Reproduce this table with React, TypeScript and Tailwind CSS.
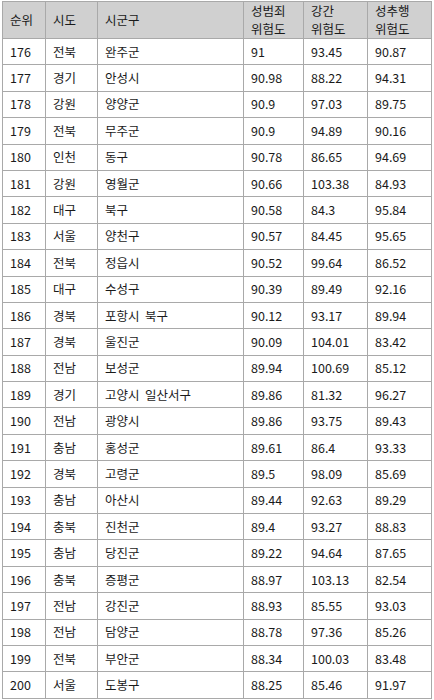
const rows: [number, string, string, string, string, string][] = [
  [176, '전북', '완주군', '91', '93.45', '90.87'],
  [177, '경기', '안성시', '90.98', '88.22', '94.31'],
  [178, '강원', '양양군', '90.9', '97.03', '89.75'],
  [179, '전북', '무주군', '90.9', '94.89', '90.16'],
  [180, '인천', '동구', '90.78', '86.65', '94.69'],
  [181, '강원', '영월군', '90.66', '103.38', '84.93'],
  [182, '대구', '북구', '90.58', '84.3', '95.84'],
  [183, '서울', '양천구', '90.57', '84.45', '95.65'],
  [184, '전북', '정읍시', '90.52', '99.64', '86.52'],
  [185, '대구', '수성구', '90.39', '89.49', '92.16'],
  [186, '경북', '포항시 북구', '90.12', '93.17', '89.94'],
  [187, '경북', '울진군', '90.09', '104.01', '83.42'],
  [188, '전남', '보성군', '89.94', '100.69', '85.12'],
  [189, '경기', '고양시 일산서구', '89.86', '81.32', '96.27'],
  [190, '전남', '광양시', '89.86', '93.75', '89.43'],
  [191, '충남', '홍성군', '89.61', '86.4', '93.33'],
  [192, '경북', '고령군', '89.5', '98.09', '85.69'],
  [193, '충남', '아산시', '89.44', '92.63', '89.29'],
  [194, '충북', '진천군', '89.4', '93.27', '88.83'],
  [195, '충남', '당진군', '89.22', '94.64', '87.65'],
  [196, '충북', '증평군', '88.97', '103.13', '82.54'],
  [197, '전남', '강진군', '88.93', '85.55', '93.03'],
  [198, '전남', '담양군', '88.78', '97.36', '85.26'],
  [199, '전북', '부안군', '88.34', '100.03', '83.48'],
  [200, '서울', '도봉구', '88.25', '85.46', '91.97'],
];

const cell = 'border border-[#a9a9a9] px-[7px] text-left align-middle';

export default function App() {
  return (
    <div className="bg-white pl-[2px] pt-[1px] text-[12.5px] leading-[16px] text-[#1a1a1a] [font-family:'Noto_Sans_CJK_KR','Noto_Sans',sans-serif]">
      <table className="w-[429px] table-fixed border-collapse">
        <colgroup>
          <col className="w-[43px]" />
          <col className="w-[52px]" />
          <col className="w-[146px]" />
          <col className="w-[60px]" />
          <col className="w-[64px]" />
          <col className="w-[64px]" />
        </colgroup>
        <thead>
          <tr className="h-[36px] bg-[#d0d0d0] leading-[18px]">
            <th className={`${cell} font-normal`}>순위</th>
            <th className={`${cell} font-normal`}>시도</th>
            <th className={`${cell} font-normal`}>시군구</th>
            <th className={`${cell} font-normal`}>
              <span className="block">성범죄</span>
              <span className="block">위험도</span>
            </th>
            <th className={`${cell} font-normal`}>
              <span className="block">강간</span>
              <span className="block">위험도</span>
            </th>
            <th className={`${cell} font-normal`}>
              <span className="block">성추행</span>
              <span className="block">위험도</span>
            </th>
          </tr>
        </thead>
        <tbody>
          {rows.map((r) => (
            <tr key={r[0]} className="h-[26.4px]">
              <td className={cell}>{r[0]}</td>
              <td className={cell}>{r[1]}</td>
              <td className={`${cell} whitespace-pre`}>{r[2].replace(' ', '  ')}</td>
              <td className={cell}>{r[3]}</td>
              <td className={cell}>{r[4]}</td>
              <td className={cell}>{r[5]}</td>
            </tr>
          ))}
        </tbody>
      </table>
    </div>
  );
}
